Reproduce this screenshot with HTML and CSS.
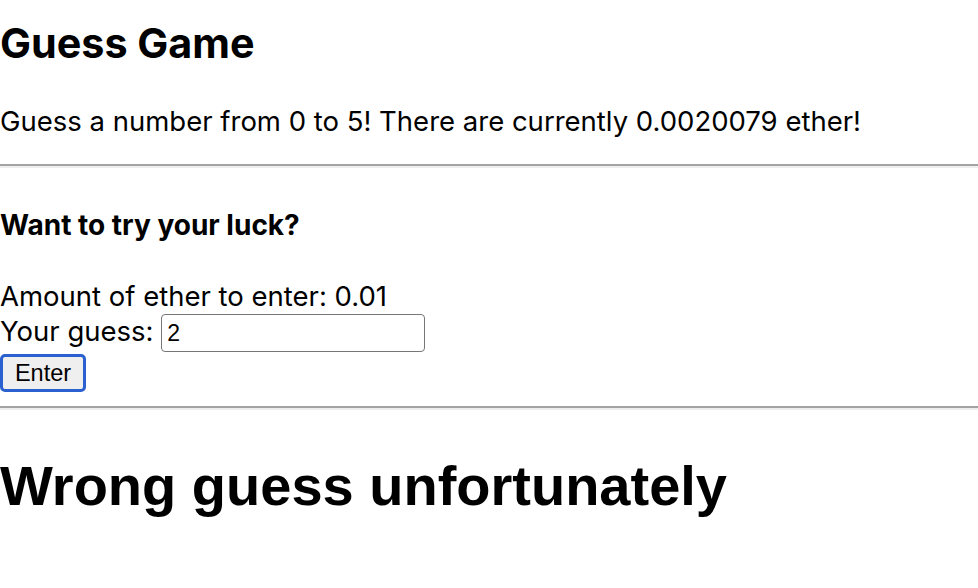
FILE: index.html
```html
<!DOCTYPE html>
<html>
<head>
<meta charset="utf-8">
<link rel="stylesheet" href="styles.css">
</head>
<body>
<div class="app">
  <h2 class="title">Guess Game</h2>
  <p class="intro">Guess a number from 0 to 5! There are currently 0.0020079 ether!</p>
  <hr class="rule rule-top">
  <form class="entry">
    <h4 class="prompt">Want to try your luck?</h4>
    <div class="field field-amount">
      <label>Amount of ether to enter: </label><span>0.01</span>
    </div>
    <div class="field field-guess">
      <label>Your guess:&nbsp;</label><input class="guess" type="text" value="2">
    </div>
    <button class="enter" type="button">Enter</button>
  </form>
  <hr class="rule rule-bottom">
  <h1 class="result">Wrong guess unfortunately</h1>
</div>
</body>
</html>
```
FILE: styles.css
```css
html, body {
  margin: 0;
  padding: 0;
  background: #fff;
}
.app {
  font-family: Inter, "Noto Sans", sans-serif;
  font-size: 27.5px;
  color: #000;
}
.title {
  font-size: 41.3px;
  font-weight: 700;
  margin: 18px 0 0;
  line-height: 50px;
}
.intro {
  margin: 37px 0 0;
  line-height: 33px;
}
.rule {
  border: none;
  border-top: 2px solid #a3a3a3;
  border-bottom: 2px solid #eeeeee;
  height: 0;
  margin: 0;
}
.rule-top {
  margin-top: 26px;
}
.entry {
  margin: 0;
}
.prompt {
  font-size: 28px;
  font-weight: 700;
  margin: 40px 0 0;
  line-height: 34px;
}
.field {
  line-height: 35px;
}
.field-amount {
  margin-top: 37px;
}
.field-guess {
  display: flex;
  align-items: flex-start;
}
.guess {
  font-family: "Liberation Sans", Arial, sans-serif;
  font-size: 23px;
  color: #000;
  width: 264px;
  height: 38px;
  box-sizing: border-box;
  border: 1.5px solid #767676;
  border-radius: 4px;
  padding: 1px 5px;
  margin: 0;
}
.enter {
  display: block;
  margin-top: 2px;
  font-family: "Liberation Sans", Arial, sans-serif;
  font-size: 23.5px;
  width: 86px;
  height: 38px;
  background: #efefef;
  border: 3px solid #2a60cf;
  border-radius: 5px;
  padding: 0;
  color: #000;
}
.rule-bottom {
  margin-top: 14px;
}
.result {
  font-family: "Liberation Sans", Arial, sans-serif;
  font-size: 56px;
  font-weight: 700;
  margin: 44px 0 0;
  line-height: 64px;
}
```
